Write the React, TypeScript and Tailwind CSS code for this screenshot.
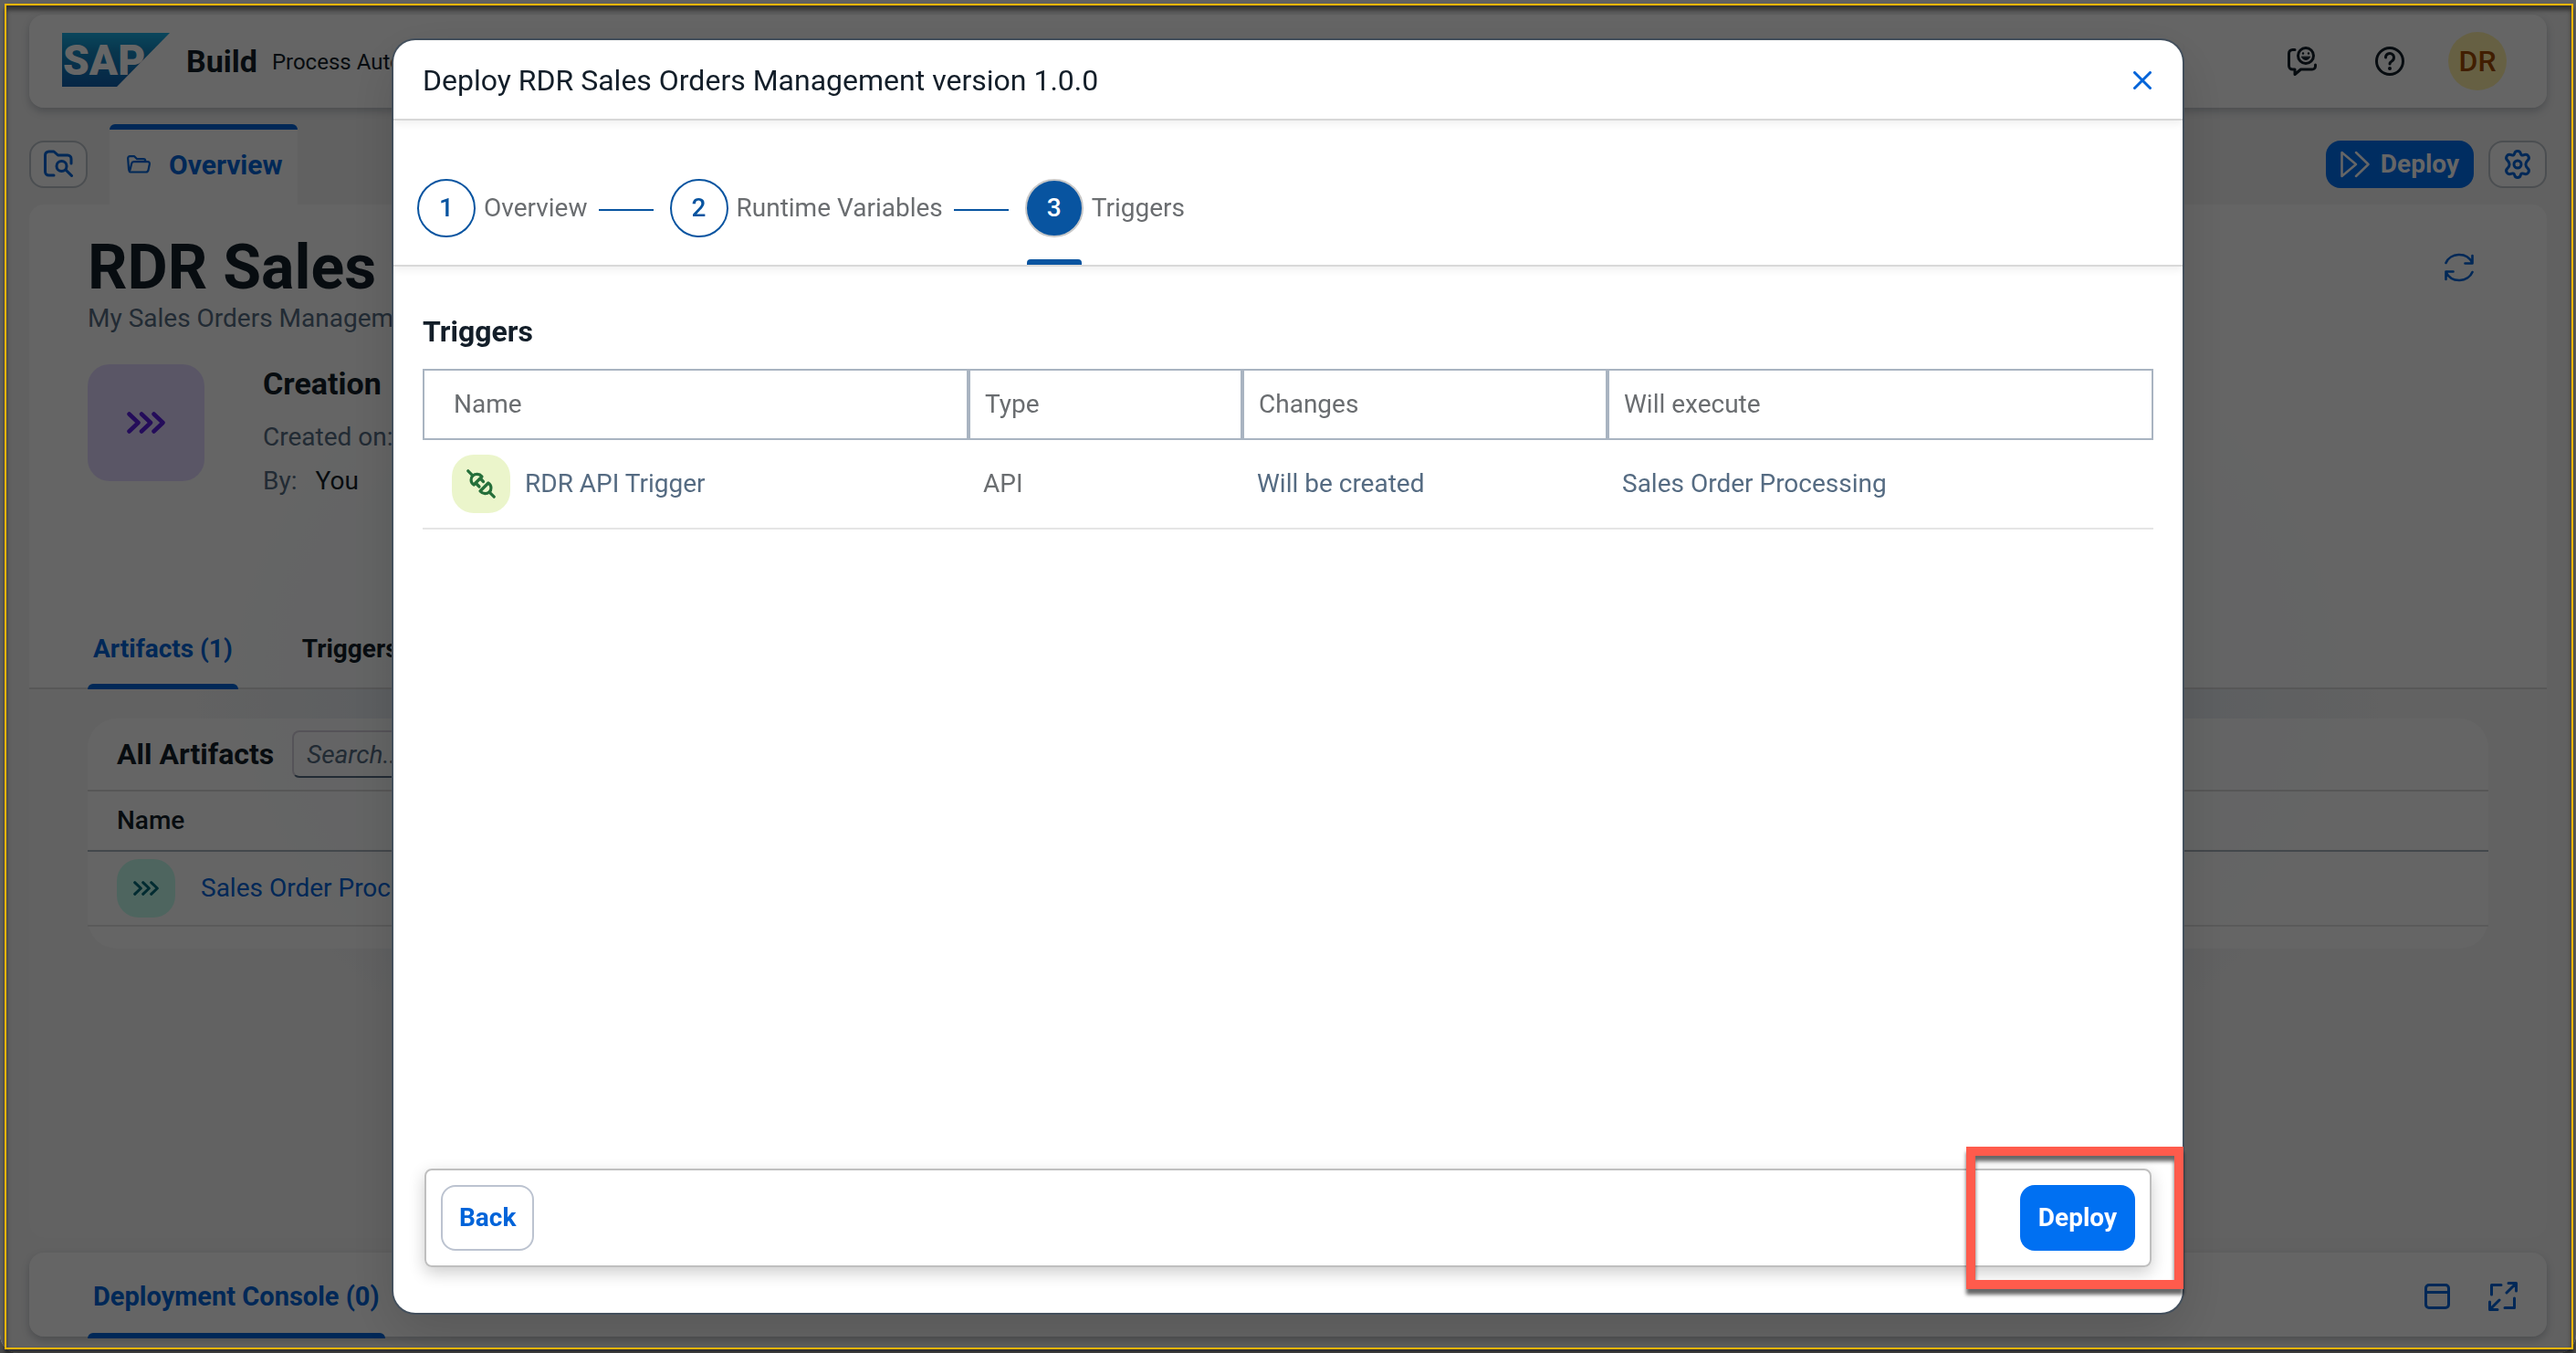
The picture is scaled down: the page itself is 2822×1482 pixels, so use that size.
import type { ReactNode } from "react";

type IconProps = { size?: string; box?: string; width?: number; children: ReactNode };

function Icon({ size = "size-8", box = "0 0 32 32", width = 3, children }: IconProps) {
  return (
    <svg
      className={`${size} shrink-0`}
      viewBox={box}
      fill="none"
      stroke="currentColor"
      strokeWidth={width}
      strokeLinecap="round"
      strokeLinejoin="round"
      aria-hidden="true"
    >
      {children}
    </svg>
  );
}

function Chevrons({ size }: { size: string }) {
  return (
    <Icon size={size} box="0 0 42 24" width={4.5}>
      <path d="M2.5 2.5 12.5 12l-10 9.5M16 2.5 26 12l-10 9.5M29.5 2.5 39.5 12l-10 9.5" />
    </Icon>
  );
}

function SapLogo() {
  return (
    <svg className="h-[59px] w-[118px] shrink-0" viewBox="0 0 118 59" role="img" aria-label="SAP">
      <defs>
        <linearGradient id="sap" x1="0" y1="0" x2="0" y2="1">
          <stop offset="0" stopColor="#1ab0e6" />
          <stop offset="0.35" stopColor="#1487c0" />
          <stop offset="1" stopColor="#0f5fae" />
        </linearGradient>
      </defs>
      <path d="M0 0H118L60 59H0Z" fill="url(#sap)" />
      <text x="1" y="46" fontFamily="Roboto, sans-serif" fontWeight="900" fontSize="46" fill="#fff">
        SAP
      </text>
    </svg>
  );
}

function ShellBar() {
  return (
    <header className="flex h-[102px] items-center rounded-2xl bg-white/75 pr-11 pl-9 shadow-[0_4px_8px_rgba(34,53,72,0.25)]">
      <span className="-mt-1">
        <SapLogo />
      </span>
      <span className="ml-[18px] text-[34px] font-bold">Build</span>
      <span className="ml-4 pt-0.5 text-[24px]">Process Automation</span>
      <div className="ml-auto flex items-center">
        <button type="button" aria-label="Feedback" className="mr-16">
          <Icon width={3}>
            <path d="M8 3.500H5.500a4 4 0 0 0-4 4V21a4 4 0 0 0 4 4H8v5.500l6.500-5.500H27a3.500 3.500 0 0 0 3.500-3.500V20" />
            <circle cx="20" cy="10" r="8.500" />
            <path d="M15.500 11.500c1.500 4 7.500 4 9 0z" fill="currentColor" strokeWidth="1" />
            <path d="M17 7.500v.1M23 7.500v.1" strokeWidth="2.500" />
          </Icon>
        </button>
        <button type="button" aria-label="Help" className="mr-12">
          <Icon width={3}>
            <circle cx="16" cy="16" r="14.500" />
            <path d="M11.500 12a4.500 4.500 0 1 1 7 3.700c-1.700 1.100-2.500 1.800-2.500 3.300" />
            <circle cx="16" cy="24" r="2" fill="currentColor" stroke="none" />
          </Icon>
        </button>
        <span className="flex size-16 items-center justify-center rounded-full bg-[#fff0a8] text-[32px] font-medium text-[#a44c00]">
          DR
        </span>
      </div>
    </header>
  );
}

function EditorTabs() {
  return (
    <div className="mt-[18px] flex h-[88px] items-center">
      <button
        type="button"
        aria-label="Browse project"
        className="flex h-[52px] w-16 items-center justify-center rounded-2xl border-2 border-[#bcc3ca] bg-white/75 text-[#0064d9]"
      >
        <Icon>
          <path d="M11 28H5.500a4 4 0 0 1-4-4V6a4 4 0 0 1 4-4h5.500l4.500 4H26a4 4 0 0 1 4 4v5" />
          <circle cx="19.500" cy="18" r="5.500" />
          <path d="m24 22 6.500 6.500" />
        </Icon>
      </button>
      <button
        type="button"
        className="ml-6 flex h-full items-center rounded-t-md border-t-[6px] border-[#0064d9] bg-white/75 pr-4 pb-1.5 pl-[19px] text-[30px] font-bold text-[#0064d9]"
      >
        <Icon size="h-5 w-[26px]" box="0 0 26 20" width={2.2}>
          <path d="M4 18.500C2 18 2.500 17 2 15L1.200 4c-.2-1.800.6-2.800 2.300-2.800h4.700l3 3H18c1.600 0 2.300.8 2.300 2.300M4 18.500h17c1.500 0 2.200-.8 2.500-2.200l1.300-6.300c.3-1.800-.5-2.800-2-2.800H7.500c-1.300 0-2 .7-2.300 1.900L3.500 16" />
        </Icon>
        <span className="ml-5">Overview</span>
      </button>
      <button
        type="button"
        className="ml-auto flex h-[52px] items-center gap-3 rounded-2xl bg-[#0070f2] px-4 text-[28px] font-bold text-white"
      >
        <Icon width={2.5}>
          <path d="M1.500 3v26L17 16zM17 3l13.500 13L17 29" />
        </Icon>
        Deploy
      </button>
      <button
        type="button"
        aria-label="Settings"
        className="ml-4 flex h-[52px] w-16 items-center justify-center rounded-2xl border-2 border-[#bcc3ca] bg-white/75 text-[#0064d9]"
      >
        <Icon>
          <path d="M16 1.500c2 0 3 1 3.300 2.700.4 1.600 1.500 2.300 3 1.700 2.300-1 4.300-1 5.500 1s.7 3.400-.7 4.700c-1.700 1.600-2.200 2.800-2.200 4.400s.5 2.800 2.200 4.400c1.400 1.300 1.900 2.700.7 4.700s-3.200 2-5.500 1c-1.500-.6-2.600.1-3 1.700-.3 1.700-1.300 2.700-3.300 2.700s-3-1-3.300-2.700c-.4-1.600-1.500-2.300-3-1.700-2.300 1-4.300 1-5.500-1s-.7-3.400.7-4.700C6.600 18.800 7.100 17.600 7.100 16s-.5-2.800-2.200-4.400C3.500 10.300 3 8.900 4.200 6.900s3.200-2 5.500-1c1.500.6 2.600-.1 3-1.700C13 2.500 14 1.500 16 1.500z" />
          <circle cx="16" cy="16" r="4" />
        </Icon>
      </button>
    </div>
  );
}

function ProjectOverview() {
  return (
    <main className="flex grow flex-col overflow-hidden rounded-2xl bg-white/15">
      <section className="bg-white/75 pt-[37px] pr-20 pb-[116px] pl-16">
        <div className="flex items-start justify-between">
          <h1 className="text-[68px] leading-[64px] font-bold">RDR Sales Orders Management</h1>
          <button type="button" aria-label="Refresh" className="mt-4 text-[#0064d9]">
            <Icon width={2.6}>
              <path d="M1.500 11C6 0 24-2 30.500 11M30.500 3v8.500h-8M30.500 21C26 32 8 34 1.500 21M1.500 29v-8.500h8" />
            </Icon>
          </button>
        </div>
        <p className="mt-1 text-[28px] leading-10 text-[#556b82]">My Sales Orders Management</p>
        <div className="mt-[30px] flex gap-16">
          <div className="flex size-32 items-center justify-center rounded-3xl bg-[#e2d8ff] text-[#5b1fe0]">
            <Chevrons size="h-6 w-[42px]" />
          </div>
          <div>
            <h2 className="text-[34px] leading-[42px] font-bold">Creation</h2>
            <p className="mt-3.5 text-[28px] leading-[48px] text-[#556b82]">Created on:</p>
            <p className="flex gap-5 text-[28px] leading-[48px]">
              <span className="text-[#556b82]">By:</span>
              <span>You</span>
            </p>
          </div>
        </div>
      </section>
      <nav className="flex gap-16 border-b-2 border-[#d9d9d9] bg-white/75 px-16 text-[28px] font-bold">
        <button type="button" className="relative h-[86px] px-1.5 pt-0.5 text-[#0064d9]">
          Artifacts (1)
          <span className="absolute inset-x-0 -bottom-0.5 h-1.5 rounded-t-md bg-[#0064d9]" />
        </button>
        <button type="button" className="h-[86px] px-1.5 pt-0.5">
          Triggers
        </button>
      </nav>
      <section className="mx-16 mt-8 rounded-[32px] bg-white/75 pb-6">
        <div className="flex h-20 items-center gap-4 border-b-2 border-[#d9d9d9] px-8">
          <h2 className="w-44 text-[32px] font-bold">All Artifacts</h2>
          <input
            type="search"
            aria-label="Search artifacts"
            placeholder="Search..."
            className="h-[52px] w-[400px] rounded-lg border-2 border-[#d5d0dc] border-b-[#556b82] px-3.5 text-[28px] italic placeholder:text-[#556b82]"
          />
        </div>
        <table className="w-full text-left text-[28px]">
          <thead>
            <tr className="h-[65px] border-b-2 border-[#a8b3bd]">
              <th className="px-8 font-medium">Name</th>
            </tr>
          </thead>
          <tbody>
            <tr className="h-[82px] border-b-2 border-[#e0e0e0]">
              <td className="px-8">
                <span className="flex items-center gap-7">
                  <span className="flex size-16 items-center justify-center rounded-3xl bg-[#c2fcee] text-[#046c7a]">
                    <Chevrons size="h-4 w-7" />
                  </span>
                  <a href="#artifact" className="text-[#0064d9]">
                    Sales Order Processing
                  </a>
                </span>
              </td>
            </tr>
          </tbody>
        </table>
      </section>
    </main>
  );
}

function ConsoleBar() {
  return (
    <footer className="mt-4 flex h-[92px] items-center rounded-2xl bg-white/75 pr-8 pl-16 text-[#0064d9] shadow-[0_4px_8px_rgba(34,53,72,0.25)]">
      <button type="button" className="relative h-full px-1.5 pt-1.5 text-[29px] font-bold">
        Deployment Console (0)
        <span className="absolute inset-x-0 -bottom-0.5 h-1.5 rounded-t-md bg-[#0064d9]" />
      </button>
      <div className="ml-auto flex gap-10 pt-1">
        <button type="button" aria-label="Show panel">
          <Icon>
            <rect x="3.500" y="3.500" width="25" height="25" rx="3.500" />
            <path d="M3.500 11.500h25" />
          </Icon>
        </button>
        <button type="button" aria-label="Full screen">
          <Icon>
            <path d="M3.500 14V3.500H14M28.500 18v10.500H18M22 1.500h8.500V10M30 2 20 12M10 30.500H1.500V22M2 30l10-10" />
          </Icon>
        </button>
      </div>
    </footer>
  );
}

const steps = ["Overview", "Runtime Variables", "Triggers"];

function WizardSteps({ current }: { current: number }) {
  return (
    <ol className="flex items-center border-b-2 border-[#d9d9d9] pt-16 pb-[30px] pl-[26px] text-[28px] text-[#6a6d70] shadow-[0_4px_8px_rgba(0,0,0,0.06)]">
      {steps.map((label, i) => {
        const active = i === current;
        return (
          <li key={label} className="flex items-center">
            <span
              className={
                active
                  ? "relative flex size-16 items-center justify-center rounded-full border-2 border-[#c8c8c8] bg-[#0854a0] font-medium text-white"
                  : "flex size-16 items-center justify-center rounded-full border-2 border-[#0854a0] font-medium text-[#0854a0]"
              }
            >
              {i + 1}
              {active && <span className="absolute inset-x-0 -bottom-8 h-1.5 rounded-t bg-[#0854a0]" />}
            </span>
            <span className="ml-[9px]">{label}</span>
            {i < steps.length - 1 && <span className="mt-1 mr-[18px] ml-3 h-0.5 w-[60px] bg-[#0854a0]" />}
          </li>
        );
      })}
    </ol>
  );
}

function TriggerTable() {
  const head = "border-2 border-[#a9b4c1] font-normal text-[#6a6d70]";
  return (
    <table className="mt-5 w-full table-fixed border-separate border-spacing-0 text-left text-[28px]">
      <colgroup>
        <col />
        <col className="w-[300px]" />
        <col className="w-[400px]" />
        <col />
      </colgroup>
      <thead>
        <tr className="h-[78px]">
          <th className={`${head} pl-8`}>Name</th>
          <th className={`${head} pl-4`}>Type</th>
          <th className={`${head} pl-4`}>Changes</th>
          <th className={`${head} pl-4`}>Will execute</th>
        </tr>
      </thead>
      <tbody className="text-[#556b82]">
        <tr className="h-[98px]">
          <td className="border-b-2 border-[#e5e5e5] pl-8">
            <span className="flex items-center gap-4">
              <span className="flex size-16 items-center justify-center rounded-3xl bg-[#ebf5cb] text-[#256f3a]">
                <Icon width={3.2}>
                  <path d="m1.800 1.800 5 5M25.200 25.200l5 5" />
                  <path d="M8 17C4 14.500 4.500 9 7 7s7-2.500 10 1z" />
                  <path d="M24 15c4 2.500 3.500 8 1 10s-7 2.500-10-1z" />
                  <path d="m15.500 10.500 3 3M10.500 15.500l3.500 3.500" />
                </Icon>
              </span>
              RDR API Trigger
            </span>
          </td>
          <td className="border-b-2 border-[#e5e5e5] pl-4 text-[#6a6d70]">API</td>
          <td className="border-b-2 border-[#e5e5e5] pl-4">Will be created</td>
          <td className="border-b-2 border-[#e5e5e5] pl-4">Sales Order Processing</td>
        </tr>
      </tbody>
    </table>
  );
}

function DeployDialog() {
  return (
    <div className="fixed inset-0 flex justify-center rounded-b-[20px] bg-black/60 py-11">
      <div
        role="dialog"
        aria-labelledby="deploy-title"
        className="relative flex w-full max-w-[1960px] flex-col rounded-3xl bg-white shadow-[0_0_0_2px_#434f5c,0_20px_60px_rgba(0,0,0,0.15)]"
      >
        <div className="flex h-[88px] items-center justify-between border-b-2 border-[#d9d9d9] pt-0.5 pr-[34px] pl-8 shadow-[0_4px_8px_rgba(0,0,0,0.06)]">
          <h2 id="deploy-title" className="text-[32px]">
            Deploy RDR Sales Orders Management version 1.0.0
          </h2>
          <button type="button" aria-label="Close" className="text-[#0064d9]">
            <Icon size="size-5" box="0 0 20 20">
              <path d="m1.500 1.500 17 17M18.500 1.500l-17 17" />
            </Icon>
          </button>
        </div>
        <WizardSteps current={2} />
        <section className="grow px-8 pt-[50px]">
          <h3 className="text-[32px] leading-[42px] font-bold">Triggers</h3>
          <TriggerTable />
        </section>
        <div className="mx-[34px] mb-[50px] flex items-center justify-between rounded-lg border-2 border-[#bfbfbf] p-4 shadow-[0_6px_18px_rgba(0,0,0,0.2)]">
          <button
            type="button"
            className="h-[72px] rounded-2xl border-2 border-[#bcc3d0] px-[18px] text-[28px] font-bold text-[#0064d9]"
          >
            Back
          </button>
          <button type="button" className="h-[72px] rounded-2xl bg-[#0070f2] px-5 text-[28px] font-bold text-white">
            Deploy
          </button>
        </div>
        <div className="pointer-events-none absolute -right-px bottom-[26px] h-[156px] w-[238px] border-[10px] border-[#ff5b4c] shadow-[0_6px_4px_rgba(0,0,0,0.6),inset_0_6px_4px_rgba(0,0,0,0.6)]" />
      </div>
    </div>
  );
}

export default function App() {
  return (
    <div className="relative bg-[#4a4a4a] font-['Roboto',sans-serif] text-[#131e29]">
      <div className="flex min-h-screen flex-col rounded-b-[20px] bg-[radial-gradient(ellipse_at_center,#d2dfec_0%,#dde6ee_45%,#f2f2f2_60%)] px-8 pt-4 pb-[18px]">
        <ShellBar />
        <EditorTabs />
        <ProjectOverview />
        <ConsoleBar />
      </div>
      <DeployDialog />
      <div className="pointer-events-none fixed top-1 right-[3px] bottom-1 left-[5px] border-2 border-[#ffb600] shadow-[0_5px_4px_rgba(0,0,0,0.5),inset_0_5px_5px_rgba(0,0,0,0.5)]" />
    </div>
  );
}
